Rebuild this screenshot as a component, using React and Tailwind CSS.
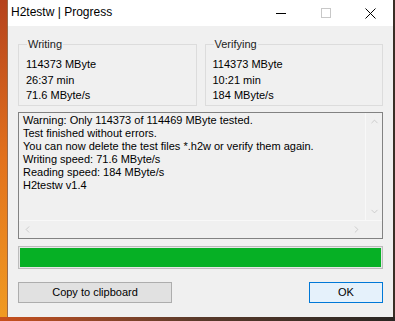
import { ChevronUp, ChevronDown, ChevronLeft, ChevronRight } from 'lucide-react'

const ui = { fontFamily: '"Liberation Sans", Arial, sans-serif' }

function Group({ title, lines }) {
  return (
    <fieldset className="flex-1 border border-[#dcdcdc] px-[7px] pb-[1px] pt-[6px] min-w-0">
      <legend className="px-[1px] ml-[1px] text-[11px] leading-[14px] text-[#222]">{title}</legend>
      {lines.map((l) => (
        <div key={l} className="text-[11px] leading-[15.5px] text-black">{l}</div>
      ))}
    </fieldset>
  )
}

export default function App() {
  const log = [
    'Warning: Only 114373 of 114469 MByte tested.',
    'Test finished without errors.',
    'You can now delete the test files *.h2w or verify them again.',
    'Writing speed: 71.6 MByte/s',
    'Reading speed: 184 MByte/s',
    'H2testw v1.4',
  ]

  return (
    <div className="w-[395px] h-[321px] overflow-hidden flex flex-col bg-gradient-to-r from-[#c9501c] via-[#5a3a2a] to-[#2a2622]" style={ui}>
      <div className="flex h-[317px]">
        <div className="w-[7px] bg-gradient-to-b from-[#b5421c] via-[#e2711c] to-[#f09a22]" />
        <div className="w-[386px] flex flex-col bg-[#f0f0f0] border-l border-[#9a6a4a]">
          {/* title bar */}
          <div className="h-[26px] bg-white flex items-center">
            <span className="ml-[3px] mb-[2px] text-[12px] text-black" style={ui}>
              H2testw | Progress
            </span>
            <div className="ml-auto flex h-full">
              <div className="w-[45px] flex items-center justify-center">
                <div className="w-[10px] h-px bg-black" />
              </div>
              <div className="w-[45px] flex items-center justify-center">
                <div className="w-[10px] h-[10px] border border-[#c8c8c8]" />
              </div>
              <div className="w-[45px] flex items-center justify-center">
                <svg width="11" height="11" viewBox="0 0 11 11">
                  <path d="M0.5 0.5 L10.5 10.5 M10.5 0.5 L0.5 10.5" stroke="#000" strokeWidth="1" />
                </svg>
              </div>
            </div>
          </div>

          <div className="flex flex-col px-[10px] pt-[11px]">
            {/* group boxes */}
            <div className="flex gap-[8px]">
              <Group title="Writing" lines={['114373 MByte', '26:37 min', '71.6 MByte/s']} />
              <Group title="Verifying" lines={['114373 MByte', '10:21 min', '184 MByte/s']} />
            </div>

            {/* log box */}
            <div className="mt-[6px] h-[127px] border border-[#828282] flex flex-col">
              <div className="flex flex-1 min-h-0">
                <div className="flex-1 pl-[4px] pt-[1px]">
                  {log.map((l) => (
                    <div key={l} className="text-[11px] leading-[13px] text-black whitespace-nowrap">{l}</div>
                  ))}
                </div>
                <div className="w-[17px] flex flex-col justify-between items-center py-[3px] border-l border-[#f8f8f8]">
                  <ChevronUp size={11} color="#bcbcbc" strokeWidth={1.5} />
                  <ChevronDown size={11} color="#bcbcbc" strokeWidth={1.5} />
                </div>
              </div>
              <div className="h-[18px] flex border-t border-[#f8f8f8]">
                <div className="flex-1 flex justify-between items-center px-[3px]">
                  <ChevronLeft size={11} color="#bcbcbc" strokeWidth={1.5} />
                  <ChevronRight size={11} color="#bcbcbc" strokeWidth={1.5} />
                </div>
                <div className="w-[17px]" />
              </div>
            </div>

            {/* progress */}
            <div className="mt-[7px] h-[23px] border border-[#bcbcbc] bg-[#e6e6e6] p-px">
              <div className="h-full w-full bg-[#06b025]" />
            </div>

            {/* buttons */}
            <div className="mt-[13px] flex justify-between">
              <button className="w-[154px] h-[21px] border border-[#adadad] bg-[#e1e1e1] text-[11px] text-black" style={ui}>
                Copy to clipboard
              </button>
              <button className="w-[74px] h-[21px] border border-[#0078d7] bg-[#e5f1fb] text-[11px] text-black" style={ui}>
                OK
              </button>
            </div>
          </div>
        </div>
        <div className="w-[2px] bg-[#3a2e26]" />
      </div>
    </div>
  )
}
